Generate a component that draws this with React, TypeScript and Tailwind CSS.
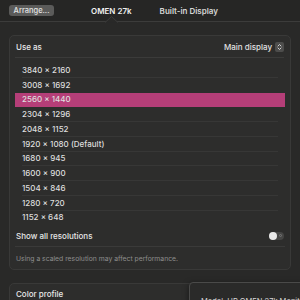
import React from 'react';

const resolutions = [
  '3840 × 2160',
  '3008 × 1692',
  '2560 × 1440',
  '2304 × 1296',
  '2048 × 1152',
  '1920 × 1080 (Default)',
  '1680 × 945',
  '1600 × 900',
  '1504 × 846',
  '1280 × 720',
  '1152 × 648',
];

function Stepper() {
  return (
    <span className="ml-[3px] inline-flex h-[10px] w-[9px] items-center justify-center rounded-[2px] bg-[#4d4d4c]">
      <svg width="5" height="8" viewBox="0 0 5 8" fill="none">
        <path d="M1 3 L2.5 1.5 L4 3" stroke="#dcdcdc" strokeWidth="0.9" strokeLinecap="round" strokeLinejoin="round" />
        <path d="M1 5 L2.5 6.5 L4 5" stroke="#dcdcdc" strokeWidth="0.9" strokeLinecap="round" strokeLinejoin="round" />
      </svg>
    </span>
  );
}

export default function App() {
  const selected = 2;

  return (
    <div
      className="relative h-[300px] w-[300px] overflow-hidden bg-[#292928] text-[#e6e6e6]"
      style={{ fontFamily: 'Inter, "Noto Sans", "Liberation Sans", sans-serif' }}
    >
      {/* toolbar */}
      <div className="relative flex h-[22px] items-center border-b border-[#3c3c3b] bg-[#262625] px-[9px]">
        <button className="flex h-[11px] w-[45px] items-center justify-center rounded-[3px] bg-[#5b5b5a] text-[7.5px] font-medium text-[#e4e4e4]">
          Arrange...
        </button>
        <span className="ml-[37px] text-[8px] font-semibold text-[#f0f0f0]">OMEN 27k</span>
        <span className="ml-[28px] text-[8px] font-semibold text-[#d6d6d6]">Built-in Display</span>
        <svg className="absolute left-[105px] top-[16px]" width="13" height="7" viewBox="0 0 13 7">
          <path d="M0 6.5 L6.5 0.5 L13 6.5" fill="#292928" stroke="#3c3c3b" strokeWidth="1" />
        </svg>
      </div>

      {/* display card */}
      <div className="mx-[9px] mt-[13px] h-[235px] rounded-[5px] border border-[#393938] bg-[#2d2d2c]">
        <div className="ml-[5px] mr-[6px] flex h-[22px] items-center justify-between border-b border-[#3b3b3a] pl-[1px]">
          <span className="text-[8px] font-medium text-[#e8e8e8]">Use as</span>
          <span className="flex items-center text-[8px] font-medium text-[#e0e0e0]">
            Main display
            <Stepper />
          </span>
        </div>

        <div className="mx-[5px] mt-[5px]">
          {resolutions.map((r, i) => (
            <div
              key={r}
              className={`flex h-[14.75px] flex-col ${i === selected ? 'bg-[#b53e78]' : ''}`}
            >
              <div className="flex flex-1 items-center pl-[7px] text-[8px] font-medium text-[#dedede]">{r}</div>
              {i < resolutions.length - 1 && i !== selected && i !== selected - 1 ? (
                <div className="mx-[7px] h-px bg-[#373736]" />
              ) : (
                <div className="h-px" />
              )}
            </div>
          ))}
        </div>

        <div className="ml-[5px] mr-[5px] flex h-[22px] items-center justify-between border-b border-[#3a3a39] pl-[1px]">
          <span className="text-[8px] font-medium text-[#e6e6e6]">Show all resolutions</span>
          <span className="relative mr-[1px] flex h-[8px] w-[15px] items-center rounded-full bg-[#464645]">
            <span className="absolute left-[0px] h-[8px] w-[8px] rounded-full bg-[#e8e8e8]" />
            <span className="absolute right-[2px] h-[3px] w-[3px] rounded-full border border-[#777]" />
          </span>
        </div>

        <div className="mx-[5px] flex h-[24px] items-center pl-[1px]">
          <span className="text-[6.8px] text-[#8e8e8d]">Using a scaled resolution may affect performance.</span>
        </div>
      </div>

      {/* color profile card */}
      <div className="mx-[9px] mt-[13px] h-[40px] rounded-[5px] border border-[#393938] bg-[#2d2d2c]">
        <div className="ml-[5px] mr-[6px] flex h-[20px] items-center justify-between pl-[1px]">
          <span className="text-[8px] font-medium text-[#e8e8e8]">Color profile</span>
          <span className="flex items-center text-[7.5px] text-[#9a9a9a]">
            OMEN 27k
            <Stepper />
          </span>
        </div>
      </div>

      {/* tooltip */}
      <div className="absolute left-[189px] top-[282px] h-[30px] w-[130px] rounded-[4px] border border-[#4a4a49] bg-[#2a2a29] pl-[11px] pt-[13px] text-[7.5px] text-[#d8d8d8] shadow-[0_2px_6px_rgba(0,0,0,0.5)]">
        Model: HP OMEN 27k Monitor
      </div>
    </div>
  );
}
